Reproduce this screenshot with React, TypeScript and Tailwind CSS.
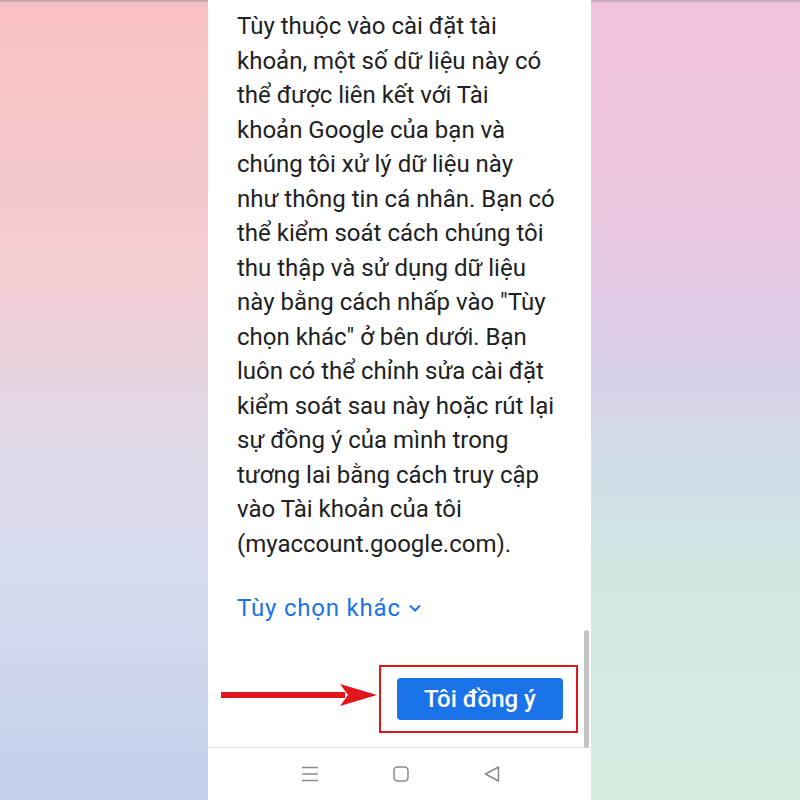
const lines = [
  "Tùy thuộc vào cài đặt tài",
  "khoản, một số dữ liệu này có",
  "thể được liên kết với Tài",
  "khoản Google của bạn và",
  "chúng tôi xử lý dữ liệu này",
  "như thông tin cá nhân. Bạn có",
  "thể kiểm soát cách chúng tôi",
  "thu thập và sử dụng dữ liệu",
  'này bằng cách nhấp vào "Tùy',
  'chọn khác" ở bên dưới. Bạn',
  "luôn có thể chỉnh sửa cài đặt",
  "kiểm soát sau này hoặc rút lại",
  "sự đồng ý của mình trong",
  "tương lai bằng cách truy cập",
  "vào Tài khoản của tôi",
  "(myaccount.google.com).",
];

function Arrow() {
  return (
    <svg width="156" height="24" viewBox="0 0 156 24" className="shrink-0">
      <rect x="0" y="9" width="124" height="6" fill="#e0161c" />
      <polygon points="119,1 156,12 119,23 127,12" fill="#e0161c" />
    </svg>
  );
}

function NavBar() {
  return (
    <div className="flex h-[53px] items-center justify-center gap-[71px] border-t border-[#e4e4e4] pl-[2px] text-[#8a8a8a]">
      <svg width="20" height="20" viewBox="0 0 20 20" fill="none" stroke="currentColor" strokeWidth="1.5">
        <path d="M2 3.5h16M2 10h16M2 16.5h16" />
      </svg>
      <svg width="20" height="20" viewBox="0 0 20 20" fill="none" stroke="currentColor" strokeWidth="1.5">
        <rect x="3" y="3" width="14" height="14" rx="3.5" />
      </svg>
      <svg width="20" height="20" viewBox="0 0 20 20" fill="none" stroke="currentColor" strokeWidth="1.5" strokeLinejoin="round">
        <path d="M3.5 10L16.5 3v14z" />
      </svg>
    </div>
  );
}

export default function App() {
  return (
    <div className="flex h-[800px] w-[800px] font-['Roboto',sans-serif]">
      <div className="w-[208px] border-t-2 border-[#c9a9b0] bg-[linear-gradient(180deg,#f8c1c3_0%,#f3cdd3_35%,#e2d8e6_52%,#d5dcee_72%,#c4cfeb_100%)]" />
      <div className="relative flex w-[383px] flex-col bg-white">
        <div className="flex-1 pl-[29px] pt-[9px]">
          <div className="text-[24px] leading-[34.5px] text-[#202124]">
            {lines.map((line) => (
              <div key={line} className="whitespace-nowrap">
                {line}
              </div>
            ))}
          </div>
          <div className="mt-[30px] flex items-center gap-[7px] text-[24px] leading-[34.5px] tracking-[0.8px] text-[#1a73e8]">
            <span>Tùy chọn khác</span>
            <svg width="14" height="10" viewBox="0 0 14 10" fill="none" stroke="currentColor" strokeWidth="2">
              <path d="M2 2.5l5 5 5-5" />
            </svg>
          </div>
        </div>
        <div className="flex items-start gap-[2px] pb-[14px] pl-[13px]">
          <div className="mt-[18px]">
            <Arrow />
          </div>
          <div className="flex h-[68px] w-[199px] items-center border-2 border-[#e0161c] pl-[16px]">
            <button className="h-[42px] w-[166px] rounded-[4px] bg-[#1a73e8] text-[24px] font-medium text-white">
              Tôi đồng ý
            </button>
          </div>
        </div>
        <NavBar />
        <div className="absolute right-[2px] top-[630px] h-[118px] w-[5px] rounded-full bg-[#c4c4c4]" />
      </div>
      <div className="w-[209px] border-t-2 border-[#c9a9bd] bg-[linear-gradient(180deg,#f2c3dc_0%,#ecc6df_25%,#dccde6_42%,#d0dde8_58%,#d2e9e1_75%,#d5ecdf_100%)]" />
    </div>
  );
}
